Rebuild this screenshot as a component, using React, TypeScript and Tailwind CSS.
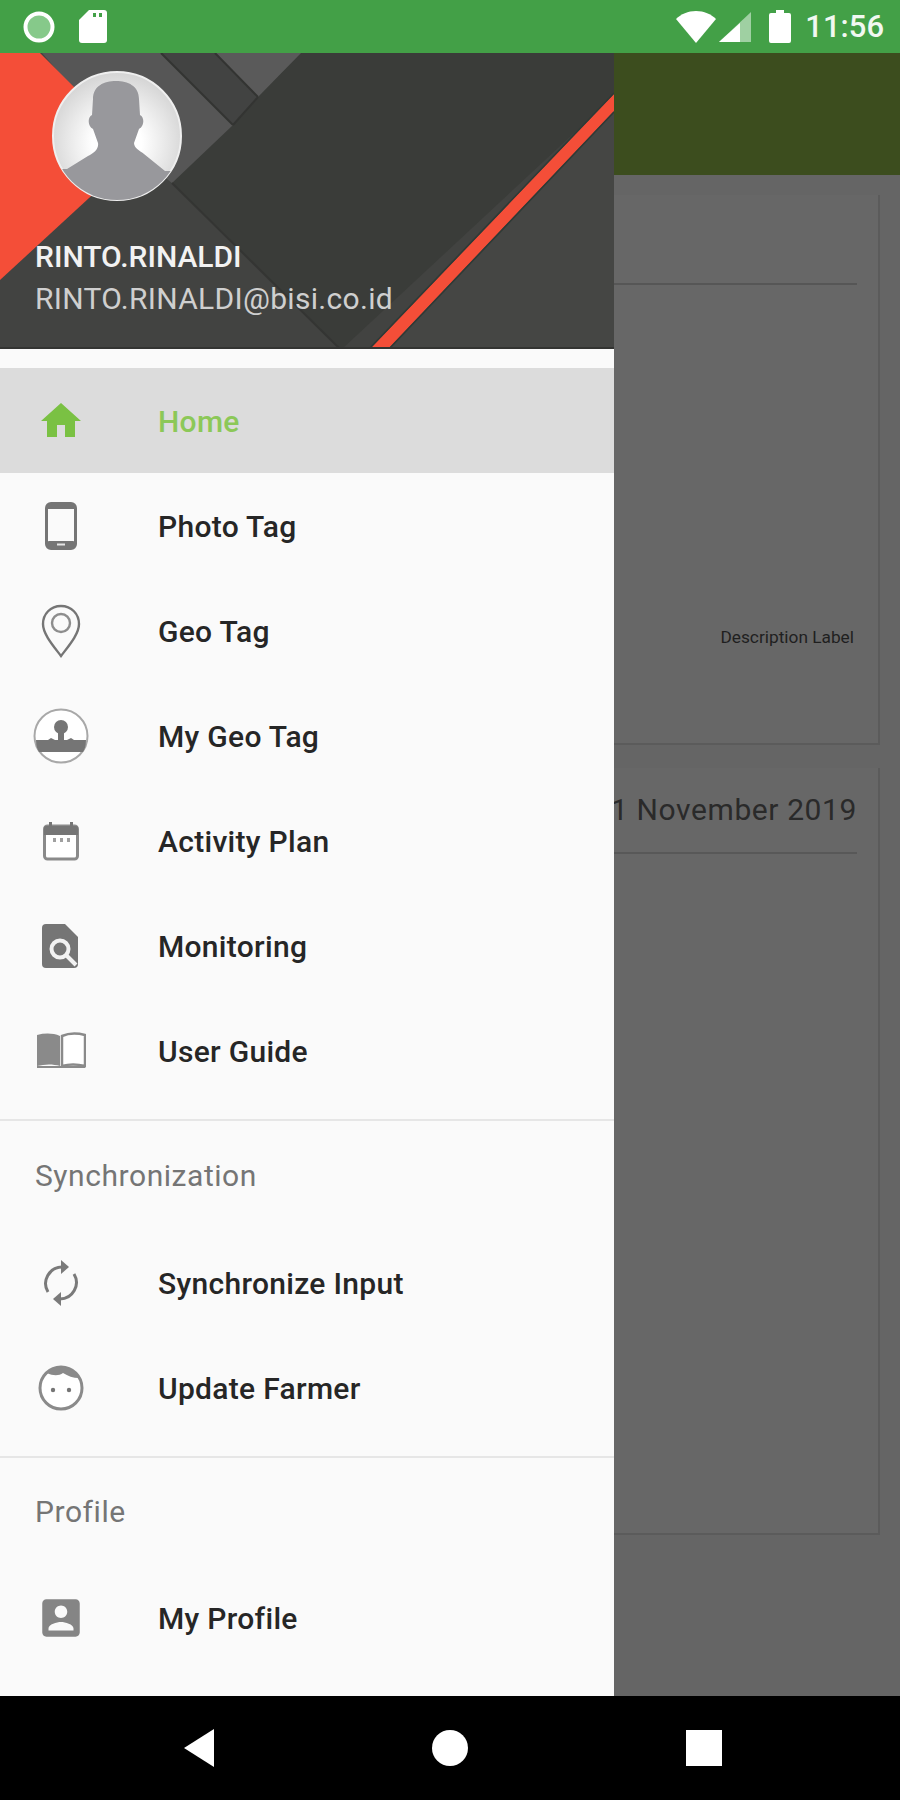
const homeGreen = '#7ac143'
const iconGray = '#757575'

const HomeIcon = () => (
	<svg width="48" height="48" viewBox="0 0 24 24" fill={homeGreen}>
		<path d="M10 20v-6h4v6h5v-8h3L12 3 2 12h3v8z" />
	</svg>
)

const PhoneIcon = () => (
	<svg width="32" height="48" viewBox="0 0 32 48">
		<rect x="1.5" y="1.5" width="29" height="45" rx="4.5" fill="none" stroke={iconGray} strokeWidth="3" />
		<rect x="2" y="2" width="28" height="5" fill={iconGray} />
		<rect x="2" y="39" width="28" height="7" rx="2" fill={iconGray} />
		<rect x="12" y="41.5" width="8" height="2" fill="#e5e5e5" />
	</svg>
)

const PinIcon = () => (
	<svg width="40" height="54" viewBox="0 0 40 54" fill="none" stroke={iconGray} strokeWidth="2.4">
		<path d="M20 2C9.5 2 2 10 2 20c0 10 10 21.500 18 32 8-10.500 18-22 18-32C38 10 30.500 2 20 2z" />
		<circle cx="20" cy="19" r="9" stroke="#8d8d8d" />
	</svg>
)

const MyGeoIcon = () => (
	<svg width="56" height="56" viewBox="0 0 56 56">
		<circle cx="28" cy="28" r="26.500" fill="#fff" stroke="#a8a8a8" strokeWidth="2" />
		<circle cx="28" cy="19" r="7" fill={iconGray} />
		<rect x="25" y="22" width="6" height="12" fill={iconGray} />
		<path d="M3 32h12l3-2 4 2h12l4-2 3 2h12c0 5-1 9-3 12H6c-2-3-3-7-3-12z" fill={iconGray} />
	</svg>
)

const CalendarIcon = () => (
	<svg width="36" height="40" viewBox="0 0 36 40">
		<rect x="1.500" y="5" width="33" height="33" rx="3" fill="#fff" stroke="#8a8a8a" strokeWidth="3" />
		<path d="M3 5h30a2 2 0 0 1 2 2v7H1V7a2 2 0 0 1 2-2z" fill={iconGray} />
		<rect x="6" y="1" width="3" height="6" fill={iconGray} />
		<rect x="27" y="1" width="3" height="6" fill={iconGray} />
		<rect x="10" y="17" width="3" height="4" fill="#a0a0a0" />
		<rect x="17" y="17" width="3" height="4" fill="#a0a0a0" />
		<rect x="24" y="17" width="3" height="4" fill="#a0a0a0" />
	</svg>
)

const MonitoringIcon = () => (
	<svg width="38" height="44" viewBox="0 0 38 44">
		<path d="M4 0h19l13 13v27a4 4 0 0 1-4 4H4a4 4 0 0 1-4-4V4a4 4 0 0 1 4-4z" fill={iconGray} />
		<circle cx="18" cy="25" r="8.500" fill={iconGray} stroke="#f2f2f2" strokeWidth="4" />
		<path d="M24 31l10 10" stroke="#f2f2f2" strokeWidth="4" />
	</svg>
)

const BookIcon = () => (
	<svg width="50" height="38" viewBox="0 0 50 38">
		<path d="M1 3c8-2 16-2 23 1v30c-7-2-15-2-23 0z" fill="#8a8a8a" />
		<path d="M26 4c7-3 15-3 23-1v31c-8-2-16-2-23 0z" fill="#fff" stroke="#8a8a8a" strokeWidth="2.500" />
		<path d="M1 34h48v2H1z" fill="#8a8a8a" />
	</svg>
)

const SyncIcon = () => (
	<svg width="38" height="46" viewBox="0 0 38 46">
		<g fill="none" stroke="#7a7a7a" strokeWidth="3">
			<path d="M6 32A16.500 16.500 0 0 1 20 7" />
			<path d="M32 14A16.500 16.500 0 0 1 18 39" />
		</g>
		<path d="M19 0l8 7-8 7z" fill="#7a7a7a" />
		<path d="M19 32l-8 7 8 7z" fill="#7a7a7a" />
	</svg>
)

const FaceIcon = () => (
	<svg width="46" height="46" viewBox="0 0 46 46">
		<circle cx="23" cy="23" r="21" fill="#fff" stroke="#8a8a8a" strokeWidth="3" />
		<path d="M9 8c4-4 9-6 14-6 8 0 14 4 18 11-6 0-11-2-16-5-4 3-10 3-16 0z" fill="#8a8a8a" />
		<circle cx="15" cy="25" r="2.200" fill={iconGray} />
		<circle cx="31" cy="25" r="2.200" fill={iconGray} />
	</svg>
)

const ProfileIcon = () => (
	<svg width="50" height="50" viewBox="0 0 24 24" fill="#858585">
		<path d="M3 5v14c0 1.100.89 2 2 2h14c1.100 0 2-.9 2-2V5c0-1.100-.9-2-2-2H5c-1.110 0-2 .9-2 2zm12 4c0 1.660-1.340 3-3 3s-3-1.340-3-3 1.340-3 3-3 3 1.340 3 3zm-9 8c0-2 4-3.100 6-3.100s6 1.100 6 3.100v1H6v-1z" />
	</svg>
)

const Avatar = () => (
	<svg width="130" height="130" viewBox="0 0 130 130">
		<defs>
			<radialGradient id="avatarBg" cx="50%" cy="55%" r="55%">
				<stop offset="0.35" stopColor="#ffffff" />
				<stop offset="1" stopColor="#d4d4d4" />
			</radialGradient>
			<clipPath id="avatarClip">
				<circle cx="65" cy="65" r="64" />
			</clipPath>
		</defs>
		<circle cx="65" cy="65" r="64" fill="url(#avatarBg)" stroke="#efefef" strokeWidth="2" />
		<g clipPath="url(#avatarClip)">
			<path
				d="M41 28C41 15 52 10 64 10S87 15 87 28L88 44C93 46 92 56 87 58L82 72C82 77 88 80 92 83L113 100H130V130H0V98H15L36 85C42 82 47 78 46 72L41 58C36 56 35 46 40 44Z"
				fill="#98989c"
			/>
		</g>
	</svg>
)

const HeaderArt = () => (
	<svg className="absolute inset-0" width="614" height="296" viewBox="0 0 614 296">
		<rect width="614" height="296" fill="#424341" />
		<polygon points="301,0 614,0 614,43 342,296 340,296 172,130" fill="#3a3c39" />
		<polygon points="42,0 161,0 233,72 172,130 120,90" fill="#565656" />
		<polygon points="161,0 215,0 258,44 233,72" fill="#424342" />
		<polygon points="215,0 301,0 258,44" fill="#5a5a5a" />
		<path d="M172 130L340 296" stroke="#343533" strokeWidth="2" />
		<path d="M161 0L233 72M215 0L258 44M258 44L233 72" stroke="#333432" strokeWidth="2" />
		<polygon points="0,0 40,0 139,99 0,227" fill="#f44e38" />
		<polygon points="614,58 614,296 388,296" fill="#454644" />
		<polygon points="614,41 614,58 388,296 370,296" fill="#f44e38" />
		<path d="M614 40L369 296M614 59L389 296" stroke="#2f3a36" strokeWidth="1.500" />
		<rect y="294" width="614" height="2" fill="#333432" />
	</svg>
)

const NavRow = ({ icon, label, active }: { icon: React.ReactNode; label: string; active?: boolean }) => (
	<div className={`flex h-[105px] items-center ${active ? 'bg-[#dcdcdc]' : ''}`}>
		<div className="flex w-[122px] shrink-0 items-center justify-center">{icon}</div>
		<span className={`ml-9 pt-0.5 text-[30px] font-medium tracking-[0.3px] ${active ? 'text-[#8cc858]' : 'text-[#262626]'}`}>
			{label}
		</span>
	</div>
)

const SectionLabel = ({ label, height }: { label: string; height: string }) => (
	<div className={`flex items-center pl-[35px] text-[30px] tracking-[0.55px] text-[#757575] ${height}`}>{label}</div>
)

const StatusBar = () => (
	<div className="flex h-[53px] shrink-0 items-center bg-[#43a047] pl-[23px] pr-4">
		<svg width="32" height="32" viewBox="0 0 32 32">
			<circle cx="16" cy="16" r="13.500" fill="#86c98a" stroke="#fff" strokeWidth="4" />
		</svg>
		<svg className="ml-6" width="28" height="33" viewBox="0 0 28 33" fill="#fff">
			<path d="M10 0h15a3 3 0 0 1 3 3v27a3 3 0 0 1-3 3H3a3 3 0 0 1-3-3V10z" />
			<rect x="14" y="3" width="3" height="4" fill="#43a047" />
			<rect x="20" y="3" width="3" height="4" fill="#43a047" />
		</svg>
		<div className="ml-auto flex items-center">
			<svg width="40" height="32" viewBox="0 0 40 32" fill="#fff">
				<path d="M0 8C5 3 12 0 20 0s15 3 20 8L20 32z" />
			</svg>
			<svg className="ml-[3px]" width="32" height="30" viewBox="0 0 32 30">
				<polygon points="32,0 32,30 0,30" fill="#9fd0a2" />
				<polygon points="21,11 21,30 0,30" fill="#fff" />
			</svg>
			<svg className="ml-[18px]" width="22" height="33" viewBox="0 0 22 33" fill="#fff">
				<path d="M7 0h8v3h5a2 2 0 0 1 2 2v26a2 2 0 0 1-2 2H2a2 2 0 0 1-2-2V5a2 2 0 0 1 2-2h5z" />
			</svg>
			<span className="ml-[14px] text-[31px] font-medium leading-none text-[#f1f8f1]">11:56</span>
		</div>
	</div>
)

const NavBar = () => (
	<div className="flex h-[104px] shrink-0 items-center bg-black">
		<svg className="ml-[184px]" width="30" height="38" viewBox="0 0 30 38" fill="#fff">
			<path d="M30 0v38L0 19z" />
		</svg>
		<div className="ml-[218px] h-9 w-9 rounded-full bg-white" />
		<div className="ml-[218px] h-9 w-9 bg-white" />
	</div>
)

export default function App() {
	return (
		<div className="flex h-[1800px] w-[900px] flex-col overflow-hidden bg-[#656565] font-['Roboto',sans-serif]">
			<StatusBar />

			<div className="flex min-h-0 flex-1">
				<aside className="flex w-[614px] shrink-0 flex-col overflow-hidden bg-[#fafafa]">
					<header className="relative h-[296px] shrink-0">
						<HeaderArt />
						<div className="relative flex flex-col pl-[35px] pt-[18px]">
							<div className="ml-[17px]">
								<Avatar />
							</div>
							<div className="mt-[38px] text-[30px] font-medium leading-9 text-[#f2f2f2]">RINTO.RINALDI</div>
							<div className="mt-[6px] text-[30px] leading-9 tracking-[0.3px] text-[#cfcfcf]">RINTO.RINALDI@bisi.co.id</div>
						</div>
					</header>

					<div className="h-[19px] shrink-0" />
					<NavRow active icon={<HomeIcon />} label="Home" />
					<NavRow icon={<PhoneIcon />} label="Photo Tag" />
					<NavRow icon={<PinIcon />} label="Geo Tag" />
					<NavRow icon={<MyGeoIcon />} label="My Geo Tag" />
					<NavRow icon={<CalendarIcon />} label="Activity Plan" />
					<NavRow icon={<MonitoringIcon />} label="Monitoring" />
					<NavRow icon={<BookIcon />} label="User Guide" />

					<div className="mt-[16px] h-0.5 shrink-0 bg-[#e6e6e6]" />
					<SectionLabel label="Synchronization" height="h-[109px]" />
					<NavRow icon={<SyncIcon />} label="Synchronize Input" />
					<NavRow icon={<FaceIcon />} label="Update Farmer" />

					<div className="mt-[16px] h-0.5 shrink-0 bg-[#e6e6e6]" />
					<SectionLabel label="Profile" height="h-[107px]" />
					<NavRow icon={<ProfileIcon />} label="My Profile" />
				</aside>

				<main className="flex min-w-0 flex-1 flex-col overflow-hidden">
					<div className="h-[122px] shrink-0 bg-[#3c4d1e]" />
					<div className="flex flex-col gap-[23px] pr-[20px] pt-[20px]">
						<section className="flex h-[550px] flex-col border-b-2 border-r-2 border-[#5b5b5b] bg-[#676767] pr-[21px]">
							<div className="mt-[88px] h-0.5 bg-[#565656]" />
							<div className="mr-[3px] mt-[342px] text-right text-[17.300px] leading-5 text-[#1f1f1f]">Description Label</div>
						</section>
						<section className="flex h-[767px] flex-col border-b-2 border-r-2 border-[#5b5b5b] bg-[#676767] pr-[21px]">
							<div className="mt-[22px] flex justify-end whitespace-nowrap text-[30px] leading-10 tracking-[0.6px] text-[#2a2a2a]">
								1 November 2019
							</div>
							<div className="mt-[22px] h-0.5 bg-[#585858]" />
						</section>
					</div>
				</main>
			</div>

			<NavBar />
		</div>
	)
}
